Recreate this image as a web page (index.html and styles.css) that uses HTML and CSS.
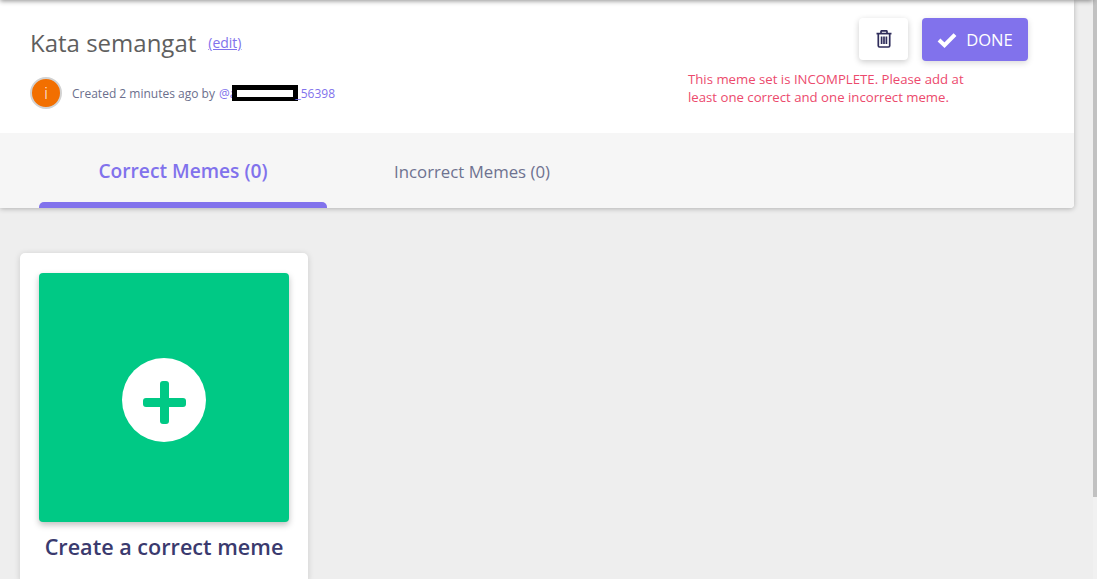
FILE: index.html
```html
<!DOCTYPE html>
<html>
<head>
  <title>Kata semangat</title>
  <link rel="stylesheet" href="styles.css">
</head>
<body>
  <div class="page">
    <div class="main">
      <div class="topbar"></div>
      <div class="panel">
        <div class="header">
          <div class="info">
            <div class="title-row">
              <h1 class="title">Kata semangat</h1>
              <a class="edit-link" href="#">(edit)</a>
            </div>
            <div class="meta">
              <div class="avatar">i</div>
              <span>Created 2 minutes ago by <a class="user-link" href="#">@a<span class="redacted"></span>_56398</a></span>
            </div>
          </div>
          <div class="actions">
            <div class="button-row">
              <button class="button-delete" aria-label="Delete">
                <svg width="16" height="18" viewBox="0 0 16 18" fill="none" stroke="#2f2d5b" stroke-width="1.7">
                  <path d="M0.5 3.6h15"/>
                  <path d="M5 3.4V1.6q0-.8.8-.8h4.4q.8 0 .8.8v1.8"/>
                  <path d="M2.3 3.6v12.2q0 1.2 1.2 1.2h9q1.2 0 1.2-1.2V3.6"/>
                  <path d="M5.6 6.5v7.6M8 6.5v7.6M10.4 6.5v7.6"/>
                </svg>
              </button>
              <button class="button-done">
                <svg width="20" height="16" viewBox="0 0 20 16" fill="none" stroke="#fff" stroke-width="4">
                  <path d="M2 8l5.5 5.2L18 2.6"/>
                </svg>
                DONE
              </button>
            </div>
            <div class="warning">This meme set is INCOMPLETE. Please add at least one correct and one incorrect meme.</div>
          </div>
        </div>
        <div class="tab-container">
          <div class="tab active">Correct Memes (0)</div>
          <div class="tab">Incorrect Memes (0)</div>
        </div>
      </div>

      <div class="content">
        <div class="card">
          <div class="create-tile">
            <div class="plus-circle">
              <svg class="plus-icon" width="43" height="43" viewBox="0 0 43 43" fill="#00c985">
                <rect x="17" y="0" width="9" height="43" rx="3"/>
                <rect x="0" y="17" width="43" height="9" rx="3"/>
              </svg>
            </div>
          </div>
          <div class="card-label">Create a correct meme</div>
        </div>
      </div>
    </div>
    <div class="scrollbar"><div class="scroll-thumb"></div></div>
  </div>
</body>
</html>
```

FILE: styles.css
```css
html, body {
  height: 100%;
  margin: 0;
  overflow: hidden;
}
body {
  font-family: 'Open Sans', sans-serif;
  color: #333;
  background-color: #eeeeee;
}
.page {
  display: flex;
  height: 100%;
}
.main {
  flex: 1;
  min-width: 0;
  position: relative;
}
.topbar {
  position: absolute;
  top: -6px;
  left: 0;
  right: 0;
  height: 6px;
  box-shadow: 0 1px 5px rgba(0, 0, 0, 0.45);
  z-index: 2;
}
.panel {
  margin-right: 19px;
  background-color: white;
  border-radius: 0 0 4px 0;
  box-shadow: 0 1px 5px rgba(0, 0, 0, 0.25);
}
.header {
  display: flex;
  justify-content: space-between;
  height: 133px;
  box-sizing: border-box;
  padding: 18px 46px 0 30px;
}
.title-row {
  display: flex;
  align-items: center;
  gap: 12px;
  margin-top: 7px;
}
.title {
  font-size: 24px;
  font-weight: 400;
  line-height: 36px;
  margin: 0;
  color: #5f5f5f;
}
.edit-link {
  font-size: 14px;
  line-height: 20px;
  color: #8172ec;
}
.meta {
  display: flex;
  align-items: center;
  gap: 10px;
  margin-top: 16px;
  font-size: 12px;
  color: #6b6f8d;
}
.avatar {
  width: 28px;
  height: 28px;
  border: 2px solid #d2d2d2;
  border-radius: 50%;
  background-color: #f26f00;
  color: white;
  font-size: 16px;
  font-weight: 300;
  line-height: 28px;
  text-align: center;
}
.user-link {
  margin-left: 1px;
  color: #8172ec;
  text-decoration: none;
}
.redacted {
  display: inline-block;
  box-sizing: border-box;
  width: 66px;
  height: 16px;
  margin: 0 -3px 0 -4px;
  vertical-align: -3px;
  background-color: white;
  border: solid black;
  border-width: 5px 5px 4px;
}
.actions {
  width: 340px;
}
.button-row {
  display: flex;
  justify-content: flex-end;
  gap: 14px;
}
.button-delete {
  display: flex;
  align-items: center;
  justify-content: center;
  width: 49px;
  height: 42px;
  padding: 0;
  border: none;
  border-radius: 4px;
  background-color: white;
  box-shadow: 0 2px 6px rgba(0, 0, 0, 0.2);
}
.button-done {
  display: flex;
  align-items: center;
  justify-content: center;
  gap: 9px;
  width: 106px;
  height: 43px;
  padding: 0;
  border: none;
  border-radius: 4px;
  background-color: #8172ec;
  color: white;
  font-family: inherit;
  font-size: 16.6px;
  box-shadow: 0 2px 6px rgba(0, 0, 0, 0.15);
}
.warning {
  width: 290px;
  margin-top: 9px;
  font-size: 13.2px;
  line-height: 18px;
  color: #ec4a6d;
}
.tab-container {
  display: flex;
  height: 75px;
  padding-left: 39px;
  background-color: #f6f6f6;
  border-radius: 0 0 4px 0;
}
.tab {
  width: 288px;
  box-sizing: border-box;
  padding-top: 26px;
  margin-right: 1px;
  text-align: center;
  font-size: 16.8px;
  line-height: 26px;
  color: #6e7290;
}
.tab.active {
  position: relative;
  padding-top: 25px;
  font-size: 19.2px;
  font-weight: 600;
  color: #8172ec;
}
.tab.active:after {
  content: "";
  position: absolute;
  left: 0;
  right: 0;
  bottom: 0;
  height: 6px;
  background-color: #8172ec;
  border-radius: 5px 5px 0 0;
}
.content {
  padding: 45px 20px 0;
}
.card {
  width: 288px;
  box-sizing: border-box;
  padding: 20px 19px;
  background-color: white;
  border-radius: 5px;
  box-shadow: 0 1px 6px rgba(0, 0, 0, 0.15);
}
.create-tile {
  display: flex;
  align-items: center;
  justify-content: center;
  height: 249px;
  padding-top: 4px;
  box-sizing: border-box;
  border-radius: 4px;
  background-color: #00c985;
  box-shadow: 0 3px 6px rgba(0, 0, 0, 0.25);
}
.plus-circle {
  display: flex;
  align-items: center;
  justify-content: center;
  width: 84px;
  height: 84px;
  border-radius: 50%;
  background-color: white;
}
.plus-icon {
  margin-top: 6px;
}
.card-label {
  margin-top: 9px;
  text-align: center;
  font-size: 21.6px;
  font-weight: 600;
  line-height: 32px;
  color: #3a3a6e;
}
.scrollbar {
  width: 4px;
  background-color: #f1f1f1;
}
.scroll-thumb {
  height: 497px;
  background-color: #c1c1c1;
}
```
